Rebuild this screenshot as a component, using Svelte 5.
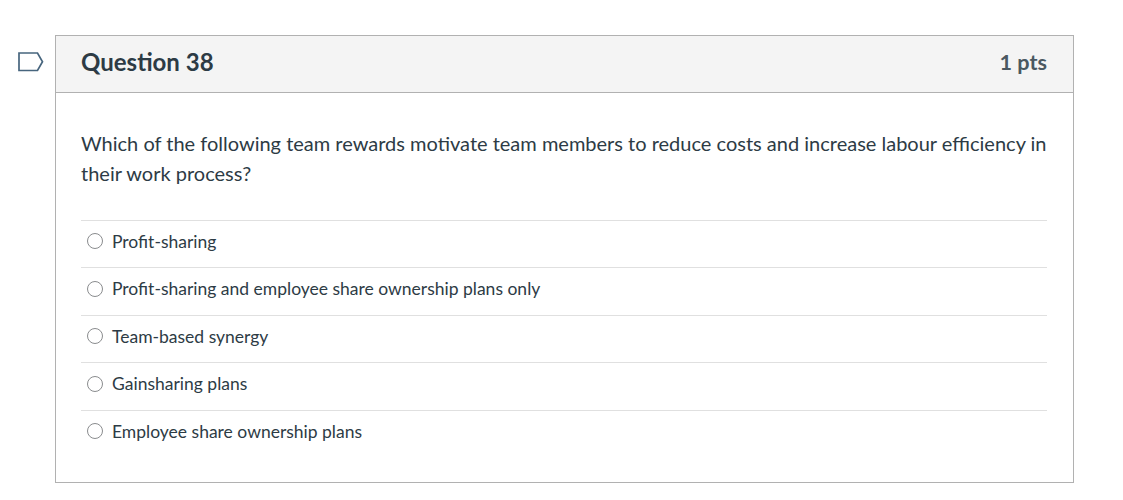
<script>
	const answers = [
		'Profit-sharing',
		'Profit-sharing and employee share ownership plans only',
		'Team-based synergy',
		'Gainsharing plans',
		'Employee share ownership plans'
	];
</script>

<div class="page">
	<svg class="flag" width="28" height="20" viewBox="0 0 28 20" aria-hidden="true">
		<path d="M2 1 H20.5 L25.5 9.75 L20.5 18.5 H2 Z" fill="#fff" stroke="#47657e" stroke-width="1.7" />
	</svg>
	<section class="question">
		<header class="head">
			<h2>Question 38</h2>
			<span class="pts">1 pts</span>
		</header>
		<div class="body">
			<p>Which of the following team rewards motivate team members to reduce costs and increase labour efficiency in their work process?</p>
			<ul>
				{#each answers as answer}
					<li>
						<span class="radio"></span>
						<span>{answer}</span>
					</li>
				{/each}
			</ul>
		</div>
	</section>
</div>

<style>
	:global(body) {
		margin: 0;
		background: #fff;
	}

	.page {
		display: flex;
		align-items: flex-start;
		width: 1123px;
		height: 500px;
		padding: 35px 0 0 17px;
		box-sizing: border-box;
		font-family: Lato, sans-serif;
		color: #2d3b45;
		overflow: hidden;
	}

	.flag {
		margin: 17px 10px 0 0;
		flex: none;
	}

	.question {
		width: 1019px;
		height: 448px;
		box-sizing: border-box;
		border: 1px solid #b1b1b1;
		flex: none;
	}

	.head {
		display: flex;
		justify-content: space-between;
		align-items: center;
		height: 57px;
		padding: 0 25px 5px;
		box-sizing: border-box;
		background: #f4f4f4;
		border-bottom: 1px solid #b1b1b1;
	}

	h2 {
		margin: 0;
		font-size: 24px;
		font-weight: 700;
	}

	.pts {
		margin-right: 1px;
		font-size: 21.6px;
		font-weight: 700;
		color: #4a5861;
	}

	.body {
		padding: 35px 26px 0 25px;
	}

	p {
		margin: 0 0 31.9px;
		font-size: 20px;
		line-height: 30px;
	}

	ul {
		margin: 0;
		padding: 0;
		list-style: none;
	}

	li {
		display: flex;
		align-items: center;
		gap: 9px;
		height: 41px;
		padding: 0 0 5.5px 6px;
		border-top: 1px solid #e0e0e0;
		font-size: 17.5px;
	}

	.radio {
		width: 14px;
		height: 14px;
		border: 1px solid #8a8c8e;
		border-radius: 50%;
		flex: none;
	}
</style>
